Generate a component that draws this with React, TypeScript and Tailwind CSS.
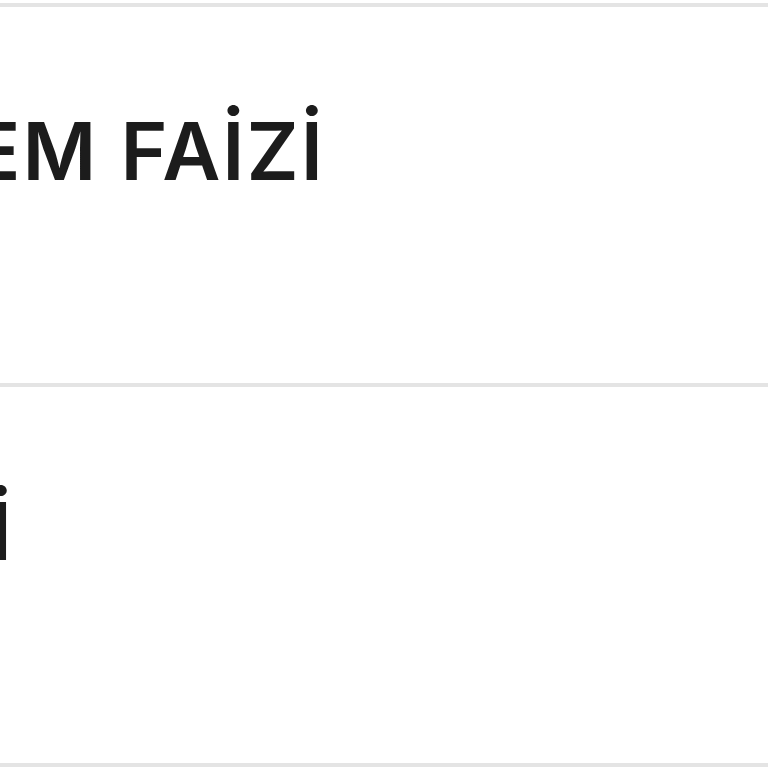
export default function App() {
  return (
    <div className="w-[768px] h-[768px] overflow-hidden bg-white pt-[3px] font-['Inter','Liberation_Sans',sans-serif] text-[#1c1c1c]">
      <div className="flex flex-col border-t-4 border-[#e4e4e4]">
        <div className="h-[380px] border-b-4 border-[#e4e4e4] pt-[104px]">
          <div className="ml-[-28px] whitespace-nowrap text-[80px] font-semibold leading-none tracking-[2px]">
            EM FAİZİ
          </div>
        </div>
        <div className="h-[380px] border-b-4 border-[#e4e4e4] pt-[104px]">
          <div className="ml-[-296px] w-[310px] whitespace-nowrap text-right text-[80px] font-semibold leading-none tracking-[2px]">
            FAİZİ
          </div>
        </div>
      </div>
    </div>
  );
}
